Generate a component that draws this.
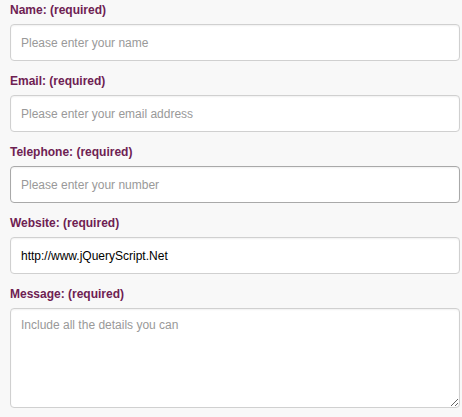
import React from 'react';

const fields = [
  { label: 'Name: (required)', placeholder: 'Please enter your name' },
  { label: 'Email: (required)', placeholder: 'Please enter your email address' },
  { label: 'Telephone: (required)', placeholder: 'Please enter your number', hover: true },
  { label: 'Website: (required)', placeholder: '', value: 'http://www.jQueryScript.Net' },
];

const inputBase =
  'block w-[450px] rounded-[4px] border bg-white px-[10px] text-[12px] text-black outline-none placeholder:text-[#999] shadow-[inset_0_1px_2px_rgba(0,0,0,0.06)]';

const App: React.FC = () => {
  return (
    <div className="min-h-screen bg-[#f8f8f8] pl-[10px] pt-[2px] font-['Liberation_Sans',Arial,sans-serif]">
      <form onSubmit={(e) => e.preventDefault()}>
        {fields.map((f) => (
          <div key={f.label} className="mb-[12px]">
            <label className="mb-[6px] block text-[12px] font-bold leading-[16px] text-[#6e2152]">
              {f.label}
            </label>
            <input
              type="text"
              placeholder={f.placeholder}
              defaultValue={f.value}
              className={`${inputBase} h-[37px] ${f.hover ? 'border-[#a9a9a9]' : 'border-[#d0d0d0]'}`}
            />
          </div>
        ))}
        <div>
          <label className="mb-[6px] block text-[12px] font-bold leading-[16px] text-[#6e2152]">
            Message: (required)
          </label>
          <textarea
            placeholder="Include all the details you can"
            className={`${inputBase} h-[100px] border-[#d0d0d0] py-[8px] leading-[16px]`}
          />
        </div>
      </form>
    </div>
  );
};

export default App;
